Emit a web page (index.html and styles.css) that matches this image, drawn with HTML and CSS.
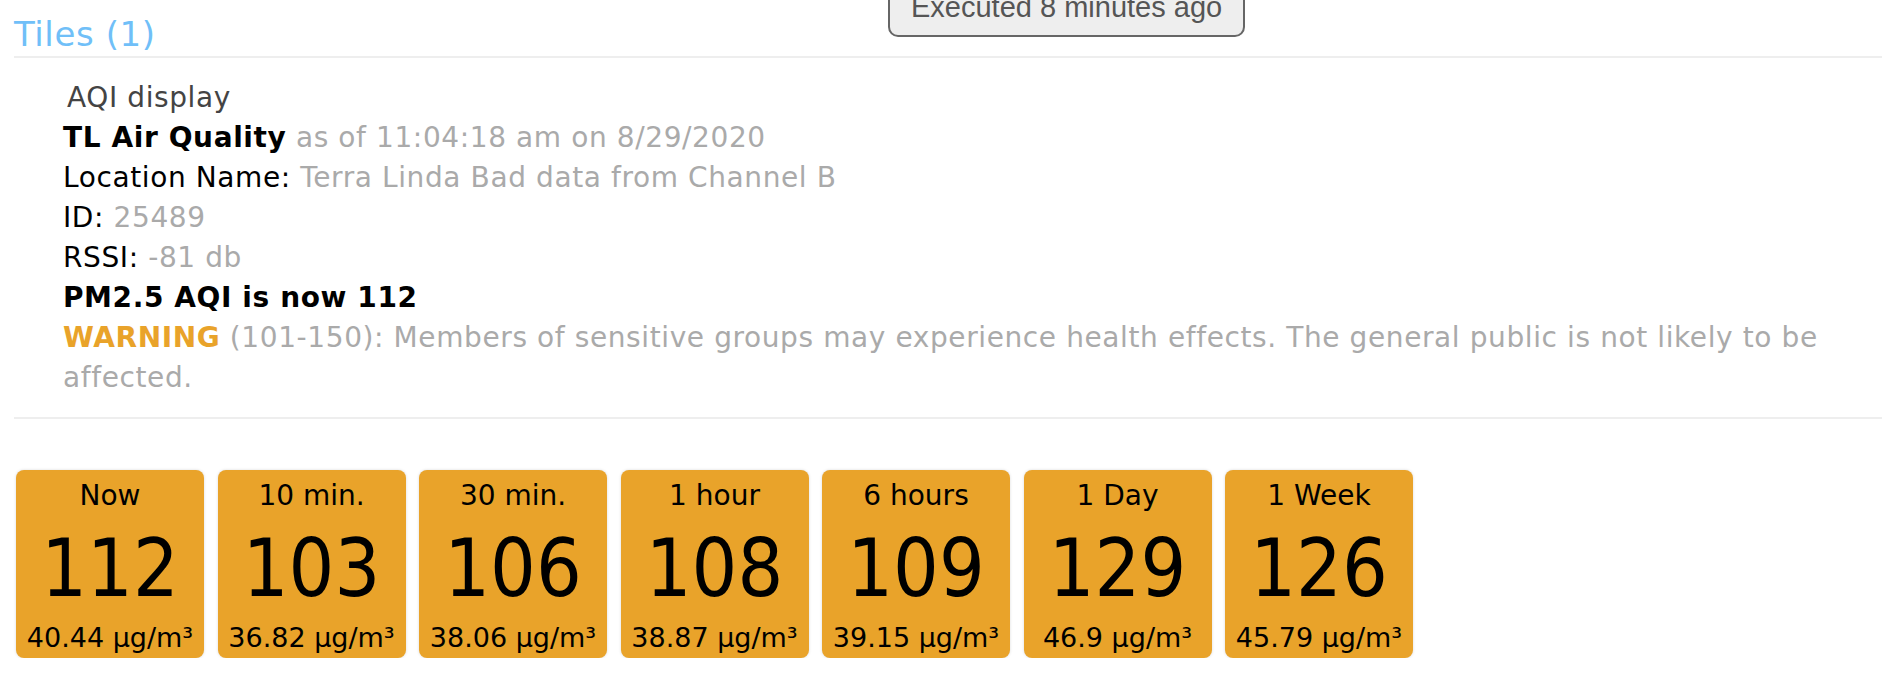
FILE: index.html
```html
<!DOCTYPE html>
<html lang="en">
<head>
    <meta charset="UTF-8">
    <title>Tiles</title>
    <link rel="stylesheet" href="styles.css">
</head>
<body>

    <div class="toast">Executed 8 minutes ago</div>

    <div class="page">
        <h2 class="section-title">Tiles (1)</h2>

        <!-- tile details -->
        <div class="tile-info">
            <div class="tile-name">AQI display</div>
            <div><b>TL Air Quality</b> <span class="muted">as of 11:04:18 am on 8/29/2020</span></div>
            <div>Location Name: <span class="muted">Terra Linda Bad data from Channel B</span></div>
            <div>ID: <span class="muted">25489</span></div>
            <div>RSSI: <span class="muted">-81 db</span></div>
            <div><b>PM2.5 AQI is now 112</b></div>
            <div><b class="warn">WARNING</b> <span class="muted">(101-150): Members of sensitive groups may experience health effects. The general public is not likely to be affected.</span></div>
        </div>

        <!-- AQI history -->
        <div class="aqi-tiles">
            <div class="aqi-tile">
                <div class="label">Now</div>
                <div class="value">112</div>
                <div class="unit">40.44 µg/m³</div>
            </div>
            <div class="aqi-tile">
                <div class="label">10 min.</div>
                <div class="value">103</div>
                <div class="unit">36.82 µg/m³</div>
            </div>
            <div class="aqi-tile">
                <div class="label">30 min.</div>
                <div class="value">106</div>
                <div class="unit">38.06 µg/m³</div>
            </div>
            <div class="aqi-tile">
                <div class="label">1 hour</div>
                <div class="value">108</div>
                <div class="unit">38.87 µg/m³</div>
            </div>
            <div class="aqi-tile">
                <div class="label">6 hours</div>
                <div class="value">109</div>
                <div class="unit">39.15 µg/m³</div>
            </div>
            <div class="aqi-tile">
                <div class="label">1 Day</div>
                <div class="value">129</div>
                <div class="unit">46.9 µg/m³</div>
            </div>
            <div class="aqi-tile">
                <div class="label">1 Week</div>
                <div class="value">126</div>
                <div class="unit">45.79 µg/m³</div>
            </div>
        </div>
    </div>

</body>
</html>
```

FILE: styles.css
```css
body {
    font-family: "DejaVu Sans", Verdana, sans-serif;
    font-size: 28px;
    line-height: 40px;
    letter-spacing: 0.6px;
    color: #000;
    background-color: #fff;
    margin: 0;
    padding: 0;
}

.page {
    padding-left: 14px;
}

.toast {
    position: absolute;
    top: -22px;
    left: 888px;
    padding: 10px 21px 11px;
    font-family: "Liberation Sans", Arial, sans-serif;
    font-size: 29px;
    line-height: 34px;
    letter-spacing: 0;
    color: #555;
    background-color: #eee;
    border: 2px solid #666;
    border-radius: 10px;
}

.section-title {
    margin: 14px 0 0;
    padding-bottom: 2px;
    font-size: 34px;
    font-weight: normal;
    line-height: 40px;
    color: #70bff8;
    border-bottom: 2px solid #eee;
}

.tile-info {
    margin-top: 20px;
    padding: 0 30px 19px 49px;
    border-bottom: 2px solid #eee;
}

.tile-info .tile-name {
    padding-left: 4px;
    color: #444;
}

.muted {
    color: #aaa;
}

.warn {
    color: #e9a32a;
}

.aqi-tiles {
    display: flex;
    gap: 13.5px;
    margin: 51px 0 0 2px;
}

.aqi-tile {
    width: 188px;
    height: 188px;
    box-sizing: border-box;
    padding-top: 6px;
    text-align: center;
    letter-spacing: 0;
    background-color: #e9a32a;
    border-radius: 8px;
    box-shadow: 0 0 3px rgba(0, 0, 0, 0.15);
}

.aqi-tile .value {
    margin: 13px 0 10px;
    font-family: "DejaVu Sans Condensed", "DejaVu Sans", sans-serif;
    font-size: 80px;
    line-height: 80px;
}

.aqi-tile .unit {
    font-size: 27px;
    line-height: 38px;
}
```
